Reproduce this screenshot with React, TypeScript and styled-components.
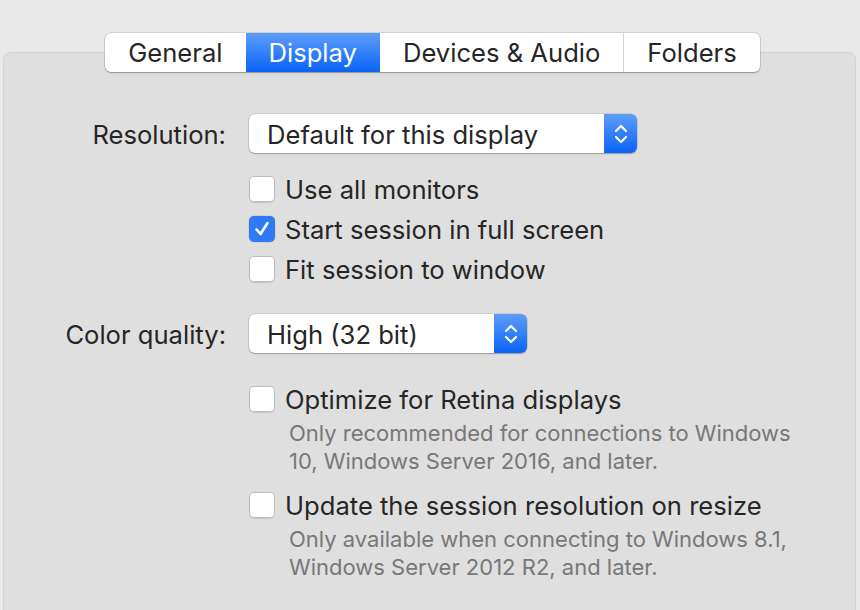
import React from "react";
import styled, { createGlobalStyle } from "styled-components";

const Global = createGlobalStyle`
  html, body { margin: 0; padding: 0; background: #e8e8e8; }
  body { font-family: Inter, "Noto Sans", "Liberation Sans", sans-serif; color: #262626; -webkit-font-smoothing: antialiased; }
  * { box-sizing: border-box; }
`;

const Page = styled.div`
  width: 860px;
  height: 610px;
  overflow: hidden;
  padding: 33px 4px 0 3px;
  display: flex;
  flex-direction: column;
`;

const TabBar = styled.div`
  position: relative;
  z-index: 1;
  align-self: center;
  margin-left: 6px;
  display: flex;
  height: 39px;
  background: #fff;
  border-radius: 6px;
  box-shadow: 0 0 0 0.5px rgba(0, 0, 0, 0.18), 0 1px 1.5px rgba(0, 0, 0, 0.28);
  overflow: hidden;
`;

const Tab = styled.div<{ $active?: boolean; $divider?: boolean }>`
  display: flex;
  align-items: center;
  justify-content: center;
  padding: 0 23px;
  font-size: 25.6px;
  color: ${(p) => (p.$active ? "#fff" : "#262626")};
  background: ${(p) => (p.$active ? "linear-gradient(#5d9df9, #0a64f7)" : "transparent")};
  border-left: ${(p) => (p.$divider ? "1px solid #d4d4d4" : "none")};
`;

const Panel = styled.div`
  margin-top: -20px;
  flex: 1;
  background: #dfdfdf;
  border: 1px solid #d2d2d2;
  border-bottom: none;
  border-radius: 8px 8px 0 0;
  padding: 61px 0 0 0;
`;

const Form = styled.div`
  display: grid;
  grid-template-columns: 222px 1fr;
  column-gap: 23px;
  align-items: start;
`;

const Label = styled.div<{ $top: number }>`
  grid-column: 1;
  text-align: right;
  font-size: 25.6px;
  line-height: 37px;
  padding-top: 2px;
  margin-top: ${(p) => p.$top}px;
`;

const Control = styled.div<{ $top: number }>`
  grid-column: 2;
  margin-top: ${(p) => p.$top}px;
  display: flex;
  flex-direction: column;
`;

const Popup = styled.div<{ $w: number }>`
  width: ${(p) => p.$w}px;
  height: 39px;
  display: flex;
  background: #fff;
  border-radius: 6px;
  box-shadow: 0 0 0 0.5px rgba(0, 0, 0, 0.16), 0 1px 1.5px rgba(0, 0, 0, 0.25);
  overflow: hidden;
`;

const PopupText = styled.div`
  flex: 1;
  padding: 2px 0 0 18px;
  font-size: 25.6px;
  line-height: 37px;
  white-space: nowrap;
`;

const Stepper = styled.div`
  width: 33px;
  display: flex;
  align-items: center;
  justify-content: center;
  background: linear-gradient(#5d9df9, #0a64f7);
`;

const CheckRow = styled.label`
  height: 40px;
  display: flex;
  align-items: center;
  gap: 10px;
  font-size: 25.6px;
  white-space: nowrap;
`;

const CheckText = styled.span`
  padding-top: 1px;
`;

const Box = styled.span<{ $checked?: boolean }>`
  width: 26px;
  height: 26px;
  border-radius: 5px;
  display: flex;
  align-items: center;
  justify-content: center;
  background: ${(p) => (p.$checked ? "#2f7bf5" : "#fff")};
  box-shadow: ${(p) =>
    p.$checked
      ? "0 0 0 0.5px rgba(0,0,0,0.12)"
      : "inset 0 0 0 1px #bdbdbd, 0 0.5px 1px rgba(0,0,0,0.12)"};
`;

const Hint = styled.div`
  padding-left: 40px;
  font-size: 22px;
  line-height: 28px;
  color: #787878;
  white-space: nowrap;
`;

const Group = styled.div<{ $top: number }>`
  margin-top: ${(p) => p.$top}px;
  display: flex;
  flex-direction: column;
`;

const Chevrons = () => (
  <svg width="16" height="24" viewBox="0 0 16 24" fill="none" stroke="#fff" strokeWidth="2.2" strokeLinecap="round" strokeLinejoin="round">
    <path d="M3 9 L8 4 L13 9" />
    <path d="M3 15 L8 20 L13 15" />
  </svg>
);

const Check = () => (
  <svg width="18" height="18" viewBox="0 0 18 18" fill="none" stroke="#fff" strokeWidth="2.6" strokeLinecap="round" strokeLinejoin="round">
    <path d="M3.5 9.5 L7.5 14 L14.5 3" />
  </svg>
);

const Checkbox = ({ label, checked }: { label: string; checked?: boolean }) => (
  <CheckRow>
    <Box $checked={checked}>{checked && <Check />}</Box>
    <CheckText>{label}</CheckText>
  </CheckRow>
);

export default function App() {
  return (
    <>
      <Global />
      <Page>
        <TabBar>
          <Tab>General</Tab>
          <Tab $active>Display</Tab>
          <Tab>Devices &amp; Audio</Tab>
          <Tab $divider>Folders</Tab>
        </TabBar>
        <Panel>
          <Form>
            <Label $top={0}>Resolution:</Label>
            <Control $top={0}>
              <Popup $w={388}>
                <PopupText>Default for this display</PopupText>
                <Stepper><Chevrons /></Stepper>
              </Popup>
              <Group $top={16}>
                <Checkbox label="Use all monitors" />
                <Checkbox label="Start session in full screen" checked />
                <Checkbox label="Fit session to window" />
              </Group>
            </Control>
            <Label $top={25}>Color quality:</Label>
            <Control $top={25}>
              <Popup $w={278}>
                <PopupText>High (32 bit)</PopupText>
                <Stepper><Chevrons /></Stepper>
              </Popup>
              <Group $top={26}>
                <Checkbox label="Optimize for Retina displays" />
                <Hint>Only recommended for connections to Windows</Hint>
                <Hint>10, Windows Server 2016, and later.</Hint>
              </Group>
              <Group $top={10}>
                <Checkbox label="Update the session resolution on resize" />
                <Hint>Only available when connecting to Windows 8.1,</Hint>
                <Hint>Windows Server 2012 R2, and later.</Hint>
              </Group>
            </Control>
          </Form>
        </Panel>
      </Page>
    </>
  );
}
